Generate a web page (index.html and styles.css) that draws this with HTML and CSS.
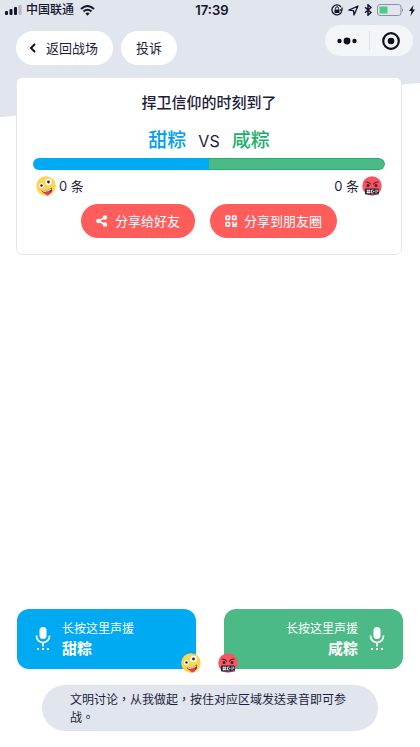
FILE: index.html
```html
<!DOCTYPE html>
<html lang="zh-CN">
<head>
<meta charset="utf-8">
<meta name="viewport" content="width=device-width, initial-scale=1">
<title>甜粽 VS 咸粽</title>
<link rel="stylesheet" href="styles.css">
</head>
<body>
<svg class="defs" aria-hidden="true">
  <symbol id="zany" viewBox="0 0 40 40">
    <circle cx="20" cy="20" r="19.5" fill="#ffd34d"/>
    <circle cx="11" cy="19" r="5" fill="#fff"/>
    <circle cx="25" cy="12" r="6.5" fill="#fff"/>
    <circle cx="11" cy="19" r="2.4" fill="#2b2030"/>
    <circle cx="25" cy="12" r="2.8" fill="#2b2030"/>
    <path d="M11 29Q23 31 31 23Q35 31 27 35Q17 38 11 29Z" fill="#702b3a"/>
    <path d="M13 29Q23 31 30 25L31 27Q23 33 14 31Z" fill="#fff"/>
    <path d="M17 32Q23 33 28 29L28 35Q25 41 20 38Z" fill="#f0384f"/>
  </symbol>
  <symbol id="angry" viewBox="0 0 40 40">
    <circle cx="20" cy="20" r="19.5" fill="#fb5560"/>
    <path d="M8 12Q14 12 17 16M32 12Q26 12 23 16" fill="none" stroke="#47202e" stroke-width="2.4" stroke-linecap="round"/>
    <circle cx="12" cy="19" r="3" fill="#47202e"/>
    <circle cx="28" cy="19" r="3" fill="#47202e"/>
    <rect x="6" y="25" width="28" height="12" rx="2" fill="#202234"/>
    <path d="M9 29.500h8M9 33h8M11.500 27v8M14.500 27v8M23 28h-4v6h4M22 31h3M28 27v8M31.500 27v5M31.500 34v1" fill="none" stroke="#fff" stroke-width="1.600"/>
  </symbol>
  <symbol id="mic" viewBox="0 0 16 24">
    <rect x="4.5" y="0" width="7" height="12" rx="3.5" fill="currentColor"/>
    <path d="M1.5 8.500v.5a6.500 6.500 0 0 0 13 0v-.5M8 15.500v4" fill="none" stroke="currentColor" stroke-width="1.700"/>
    <path d="M2 21h2v2H2zM7 21h2v2H7zM12 21h2v2h-2z" fill="currentColor"/>
  </symbol>
</svg>

<div class="page">
  <header class="status">
    <div class="status-left">
      <svg width="17" height="10" viewBox="0 0 17 10" fill="#14142b"><rect y="6" width="3" height="4" rx="1"/><rect x="4.500" y="4" width="3" height="6" rx="1"/><rect x="9" y="2" width="3" height="8" rx="1"/><rect x="13.500" width="3" height="10" rx="1" fill="#b4b6c3"/></svg>
      <span>中国联通</span>
      <svg class="wifi" width="15" height="11" viewBox="0 0 15 11" fill="none" stroke="#14142b" stroke-width="2"><path d="M1 4Q7.500-2 14 4M3.500 6.500Q7.500 3 11.500 6.500"/><path d="M5.300 8.300Q7.500 6.500 9.700 8.300L7.500 10.800Z" fill="#14142b" stroke="none"/></svg>
    </div>
    <time class="clock">17:39</time>
    <div class="status-right">
      <svg width="12" height="12" viewBox="0 0 12 12" fill="none" stroke="#14142b"><path d="M10 3A5 5 0 1 0 10.500 8M11 3.500v3M9.200 5.500L11 7.500" stroke-width="1.300"/><path d="M4.500 5.500V4.300a1.500 1.500 0 0 1 3 0v1.200"/><rect x="3.500" y="5.500" width="5" height="3.500" fill="#14142b" stroke="none"/></svg>
      <svg width="11" height="11" viewBox="0 0 11 11"><path d="M10 1L1 5.200 5.500 5.700 6 10Z" fill="none" stroke="#14142b" stroke-width="1.300" stroke-linejoin="round"/></svg>
      <svg width="8" height="12" viewBox="0 0 8 12"><path d="M1 3.200L7 8.500 4 11.200V.8L7 3.500 1 8.800" fill="none" stroke="#14142b" stroke-width="1.500"/></svg>
      <svg width="27" height="12" viewBox="0 0 27 12"><rect x=".5" y=".5" width="23.500" height="11" rx="2.500" fill="none" stroke="#8f919f"/><rect x="2.500" y="2.500" width="8" height="7" fill="#48cc86"/><path d="M25 4v4q2-2 0-4z" fill="#8f919f"/></svg>
      <svg width="6" height="11" viewBox="0 0 6 11"><path d="M4.500 0L0 6h2.500L1.500 11 6 4.500H3.500Z" fill="#14142b"/></svg>
    </div>
  </header>

  <nav class="nav">
    <button class="pill back" type="button"><svg width="7" height="10" viewBox="0 0 7 10"><path d="M6 1L2 5l4 4" fill="none" stroke="#14142b" stroke-width="2"/></svg><span>返回战场</span></button>
    <button class="pill" type="button"><span>投诉</span></button>
    <div class="capsule">
      <button type="button" aria-label="更多"><svg width="20" height="8" viewBox="0 0 20 8" fill="#101022"><circle cx="2.500" cy="4" r="2.200"/><circle cx="10" cy="4" r="3.400"/><circle cx="17.500" cy="4" r="2.200"/></svg></button>
      <button type="button" aria-label="关闭"><svg width="18" height="18" viewBox="0 0 18 18"><circle cx="9" cy="9" r="7.800" fill="none" stroke="#101022" stroke-width="2.200"/><circle cx="9" cy="9" r="3.300" fill="#101022"/></svg></button>
    </div>
  </nav>

  <main class="main">
    <section class="card">
      <h1>捍卫信仰的时刻到了</h1>
      <div class="versus"><strong class="sweet">甜粽</strong><span>VS</span><strong class="salty">咸粽</strong></div>
      <div class="bar"><span class="bar-sweet"></span><span class="bar-salty"></span></div>
      <div class="counts">
        <span class="count"><svg class="emoji"><use href="#zany"/></svg>0 条</span>
        <span class="count">0 条<svg class="emoji"><use href="#angry"/></svg></span>
      </div>
      <div class="shares">
        <button class="share" type="button"><svg width="12" height="12" viewBox="0 0 12 12"><path d="M10 2L2.500 6 10 10" fill="none" stroke="#fff" stroke-width="1.500"/><g fill="#fff"><circle cx="9" cy="2.500" r="2.200"/><circle cx="2.500" cy="6" r="2.300"/><circle cx="9" cy="9.500" r="2.200"/></g></svg><span>分享给好友</span></button>
        <button class="share" type="button"><svg width="12" height="12" viewBox="0 0 12 12" fill="none" stroke="#fff" stroke-width="1.600"><rect x="1" y="1" width="3.500" height="3.500" rx=".5"/><rect x="7.500" y="1" width="3.500" height="3.500" rx=".5"/><rect x="1" y="7.500" width="3.500" height="3.500" rx=".5"/><path d="M6.800 7.500h2M11.500 6.700v2.600H8V11.200h4"/></svg><span>分享到朋友圈</span></button>
      </div>
    </section>
  </main>

  <footer class="footer">
    <div class="actions">
      <button class="voice voice-sweet" type="button">
        <svg class="mic"><use href="#mic"/></svg>
        <span class="voice-text"><span>长按这里声援</span><strong>甜粽</strong></span>
        <svg class="emoji badge"><use href="#zany"/></svg>
      </button>
      <button class="voice voice-salty" type="button">
        <svg class="mic"><use href="#mic"/></svg>
        <span class="voice-text"><span>长按这里声援</span><strong>咸粽</strong></span>
        <svg class="emoji badge"><use href="#angry"/></svg>
      </button>
    </div>
    <p class="notice" lang="zh-TW">文明讨论，从我做起，按住对应区域发送录音即可参战。</p>
  </footer>
</div>
</body>
</html>
```
FILE: styles.css
```css
* {
  box-sizing: border-box;
}

body {
  margin: 0;
  background: #fff;
  color: #1d1d3a;
  font-family: "Liberation Sans", "Noto Sans CJK SC", sans-serif;
  font-size: 13px;
}

button {
  border: 0;
  padding: 0;
  color: inherit;
  font: inherit;
  cursor: pointer;
}

svg {
  display: block;
  flex: none;
}

.defs {
  position: absolute;
  width: 0;
  height: 0;
}

.page {
  position: relative;
  isolation: isolate;
  display: flex;
  flex-direction: column;
  min-height: 100vh;
}

/* Slanted lower edge of the header backdrop */
.page::before {
  content: "";
  position: absolute;
  z-index: -1;
  inset: 0 0 auto;
  height: 117px;
  background: #e1e5ed;
  clip-path: polygon(0 0, 100% 0, 100% 71%, 0 100%);
}

.status {
  display: grid;
  grid-template-columns: 51fr auto 50fr;
  align-items: center;
  height: 20px;
  padding: 0 5px;
  font-size: 12px;
  line-height: 20px;
  color: #14142b;
}

.status-left,
.status-right {
  display: flex;
  align-items: center;
  gap: 4px;
}

.status-left span {
  font-weight: 500;
}

.status-right {
  justify-content: flex-end;
  gap: 5px;
}

.wifi {
  margin-left: 2px;
}

.clock {
  font-family: Inter, sans-serif;
  font-weight: 600;
  font-size: 13px;
}

.nav {
  display: flex;
  align-items: flex-end;
  gap: 8px;
  height: 45px;
  padding: 0 7px 0 16px;
}

.pill,
.share {
  display: flex;
  align-items: center;
  height: 34px;
  border-radius: 17px;
}

.pill span,
.share span {
  padding-bottom: 2px;
}

.pill {
  gap: 10px;
  padding: 0 15px;
  background: #fff;
}

.back {
  padding-left: 13px;
}

.capsule {
  display: flex;
  align-self: flex-start;
  margin: 5px 0 0 auto;
  width: 88px;
  height: 31px;
  border-radius: 16px;
  background: #f4f5f8;
}

.capsule button {
  display: flex;
  flex: 1;
  align-items: center;
  justify-content: center;
  background: none;
}

.capsule button + button {
  background: linear-gradient(#dcdfe6, #dcdfe6) left center / 1px 19px no-repeat;
}

.main {
  flex: 1;
  padding: 12px 18px 24px 16px;
}

.card {
  padding: 13px 16px 16px;
  border: 1px solid #e4e8ee;
  border-radius: 6px;
  background: #fff;
}

.card h1 {
  margin: 0;
  font-size: 15px;
  line-height: 24px;
  font-weight: 500;
  text-align: center;
}

.versus {
  display: flex;
  align-items: center;
  justify-content: center;
  gap: 12px;
  margin-top: 12px;
  font-size: 19px;
  line-height: 28px;
}

.versus span {
  font-family: Inter, sans-serif;
  font-size: 16px;
}

.versus strong {
  font-weight: 500;
}

.sweet {
  color: #00a0ee;
}

.salty {
  color: #1faf6c;
}

.bar {
  display: flex;
  height: 12px;
  margin-top: 3px;
  border-radius: 6px;
  overflow: hidden;
}

.bar span {
  flex: 1;
}

.bar-sweet {
  background: #00aaf2;
}

.bar-salty {
  border: 1px solid #1faf6c;
  border-left: 0;
  border-radius: 0 6px 6px 0;
  background: #4cba87;
}

.counts {
  display: flex;
  justify-content: space-between;
  margin-top: 6px;
  padding: 0 3px;
}

.count {
  display: flex;
  align-items: center;
  gap: 3px;
  line-height: 20px;
  font-family: Inter, "Noto Sans CJK SC", sans-serif;
}

.emoji {
  width: 20px;
  height: 20px;
}

.shares {
  display: flex;
  justify-content: center;
  gap: 15px;
  margin-top: 8px;
}

.share {
  gap: 7px;
  padding: 0 15px;
  background: #ff5c5c;
  color: #fff;
}

.footer {
  padding: 0 17px 16px;
}

.actions {
  display: flex;
  gap: 28px;
}

.voice {
  position: relative;
  display: flex;
  flex: 1;
  align-items: center;
  gap: 11px;
  height: 60px;
  padding: 0 18px;
  border-radius: 12px;
  color: #fff;
  text-align: left;
}

.voice-sweet {
  background: #00aaf2;
}

.voice-salty {
  flex-direction: row-reverse;
  background: #4cba87;
  text-align: right;
}

.mic {
  width: 16px;
  height: 24px;
}

.voice-text {
  display: flex;
  flex-direction: column;
  font-size: 12px;
  line-height: 20px;
}

.voice-text strong {
  font-size: 15px;
}

.badge {
  position: absolute;
  right: -5px;
  bottom: -4px;
}

.voice-salty .badge {
  right: auto;
  left: -6px;
}

.notice {
  margin: 16px 25px 0;
  padding: 5px 28px;
  border-radius: 24px;
  background: #e1e5ed;
  font-family: "Noto Sans CJK TC", sans-serif;
  font-size: 12px;
  line-height: 18px;
}
```
